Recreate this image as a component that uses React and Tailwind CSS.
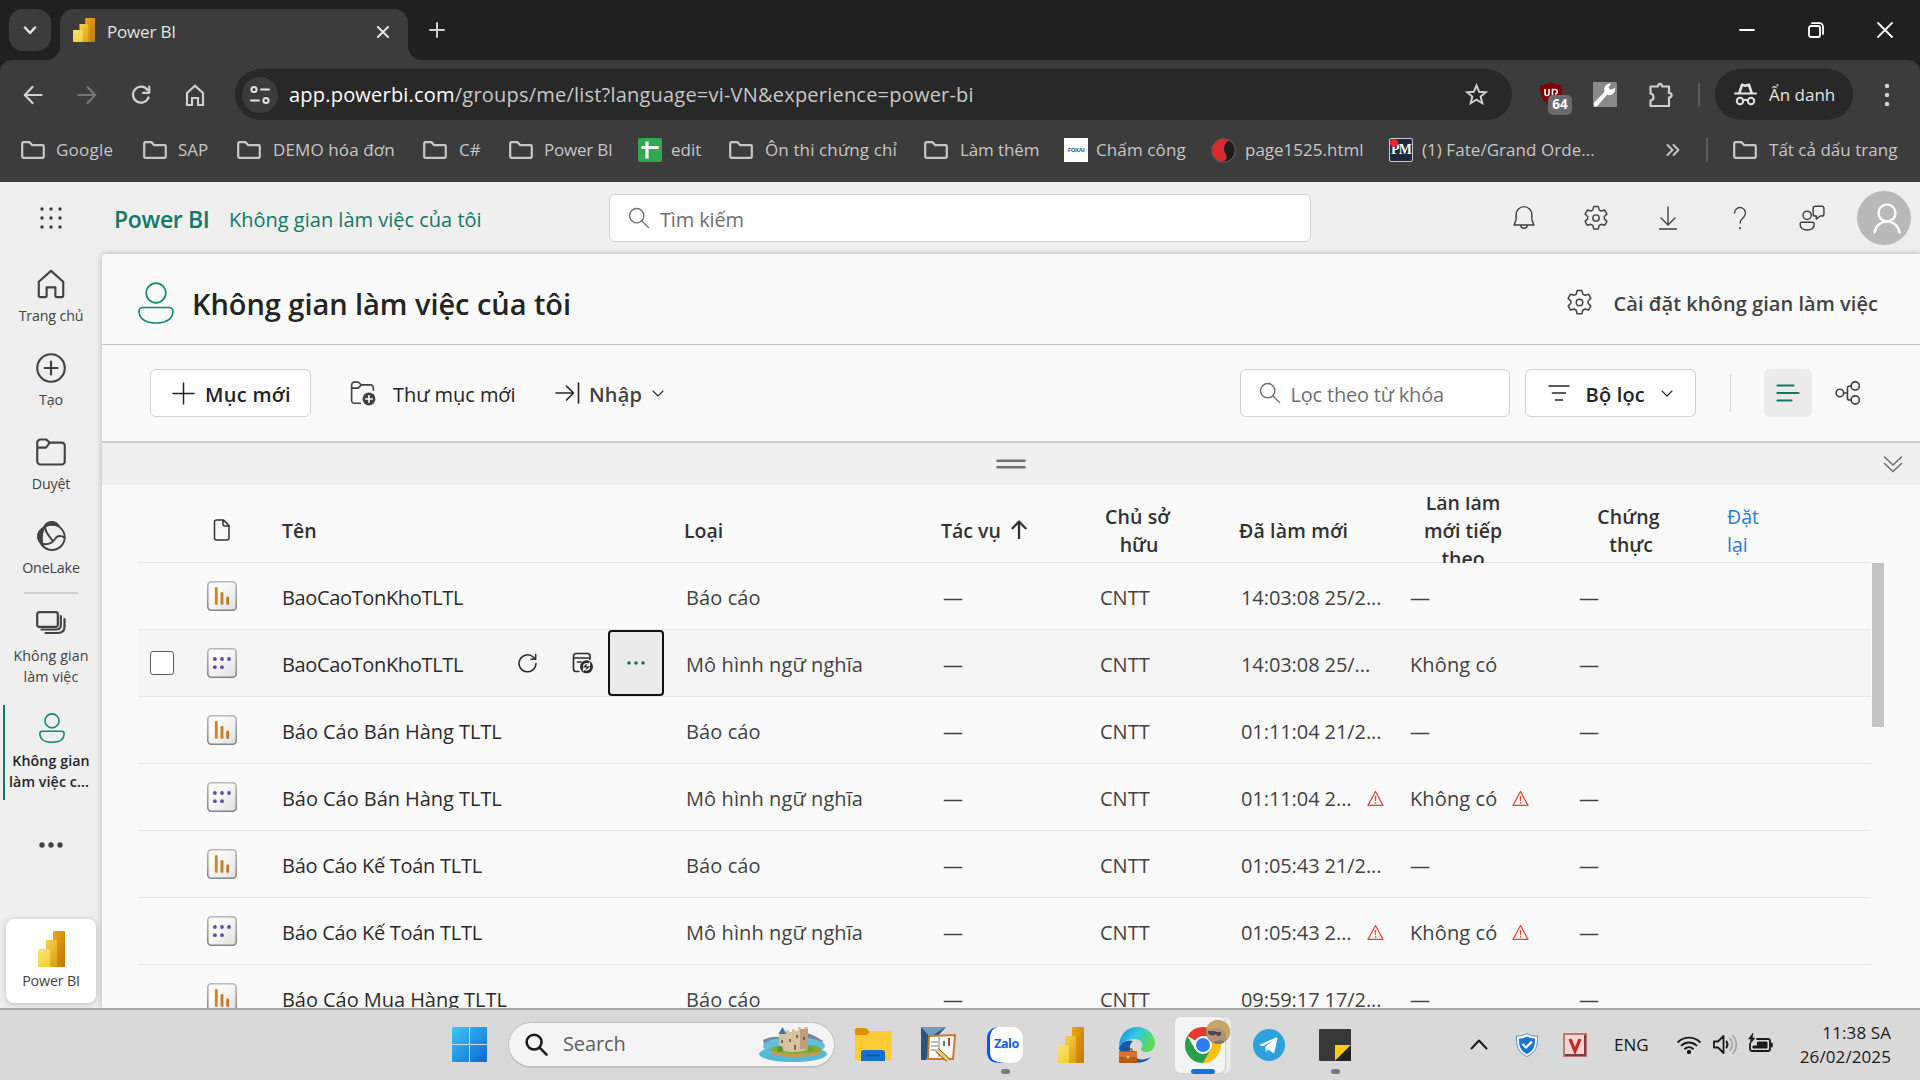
import React from "react";

function Ico({ w = 24, h, vb = "0 0 24 24", sw = 1.5, className = "", children }) {
  return (
    <svg width={w} height={h || w} viewBox={vb} fill="none" stroke="currentColor" strokeWidth={sw} strokeLinecap="round" strokeLinejoin="round" className={"block shrink-0 " + className}>
      {children}
    </svg>
  );
}

function PowerBI({ w, h, className = "" }) {
  return (
    <svg width={w} height={h} viewBox="0 0 27 36" preserveAspectRatio="none" className={"block shrink-0 " + className}>
      <defs>
        <linearGradient id="pbA" x1="0" y1="0" x2="1" y2="1"><stop offset="0" stopColor="#e9a80c" /><stop offset="1" stopColor="#c5760e" /></linearGradient>
        <linearGradient id="pbB" x1="0" y1="0" x2="0.6" y2="1"><stop offset="0" stopColor="#f6d150" /><stop offset="1" stopColor="#e0a518" /></linearGradient>
        <linearGradient id="pbC" x1="0" y1="0" x2="0.6" y2="1"><stop offset="0" stopColor="#fae678" /><stop offset="1" stopColor="#f3cf3c" /></linearGradient>
      </defs>
      <rect x="15" y="0" width="12" height="36" rx="1" fill="url(#pbA)" />
      <path d="M8 9h10a1 1 0 0 1 1 1v26H8z" fill="url(#pbB)" />
      <path d="M0 19a1 1 0 0 1 1-1h9.500a1.500 1.500 0 0 1 1.500 1.500V36H1a1 1 0 0 1-1-1z" fill="url(#pbC)" />
    </svg>
  );
}

const Folder = () => (
  <Ico w={24} h={18} vb="0 0 24 18" sw={2.2}><path d="M1.200 2.200a1 1 0 0 1 1-1h6.300l2.700 3h10.600a1 1 0 0 1 1 1v10.600a1 1 0 0 1-1 1H2.200a1 1 0 0 1-1-1z" strokeLinejoin="miter" /></Ico>
);
const Gear = ({ w = 26 }) => (
  <Ico w={w} sw={1.35}>
    <path d="M9.900 1.300h4.200l.8 3.200 1.900 1.100 3.200-.95 2.100 3.650-2.400 2.300v2.200l2.400 2.300-2.100 3.650-3.200-.95-1.900 1.100-.8 3.200H9.900l-.8-3.200-1.900-1.100-3.200.95-2.100-3.650 2.400-2.300v-2.200L1.900 8.300 4 4.650l3.200.95 1.900-1.100z" />
    <circle cx="12" cy="12" r="2.900" />
  </Ico>
);
const Magnifier = ({ w = 22, sw = 1.5 }) => (
  <Ico w={w} sw={sw}><circle cx="9.500" cy="9.500" r="7.800" /><path d="M15.200 15.200 22.500 22.500" /></Ico>
);
const Person = ({ w, h, sw }) => (
  <Ico w={w} h={h} vb="0 0 36 42" sw={sw}><circle cx="18" cy="11" r="9.800" /><path d="M4.500 25.500h27a3.500 3.500 0 0 1 3.500 3.500c0 8-7 12-17 12S1 37 1 29a3.500 3.500 0 0 1 3.500-3.500z" /></Ico>
);
const Warn = () => (
  <Ico w={17} vb="0 0 17 17" sw={1.2} className="text-[#e8432f]"><path d="M8.500 1.500 16 15.400H1z" /><path d="M8.500 6.300v4.200" /><path d="M8.500 12.800v.2" strokeWidth="1.600" /></Ico>
);
const Tile = ({ children }) => (
  <Ico w={30} vb="0 0 30 30" sw={2.800}>
    <defs>
      <linearGradient id="tileFill" x1="0" y1="0" x2="1" y2="1"><stop offset="0.300" stopColor="#fcfcfc" /><stop offset="1" stopColor="#e0e0e0" /></linearGradient>
      <linearGradient id="tileEdge" x1="0" y1="0" x2="0" y2="1"><stop offset="0" stopColor="#b8b8b8" /><stop offset="1" stopColor="#858585" /></linearGradient>
    </defs>
    <rect x="0.800" y="0.800" width="28.400" height="28.400" rx="3.500" fill="url(#tileFill)" stroke="url(#tileEdge)" strokeWidth="1.600" />
    {children}
  </Ico>
);
const ReportIcon = () => (
  <Tile><path d="M9.300 7.500v15" stroke="#cf8324" /><path d="M15 12.300v10.200" stroke="#c97a20" /><path d="M20.700 17v5.500" stroke="#c4701c" /></Tile>
);
const ModelIcon = () => (
  <Tile>
    <g fill="#6647b8" stroke="none"><circle cx="7.900" cy="11" r="1.900" /><circle cx="15" cy="11" r="1.900" /><circle cx="22" cy="11" r="1.900" /><circle cx="7.900" cy="19.200" r="1.900" /><circle cx="15" cy="19.200" r="1.900" /></g>
  </Tile>
);

function EditMark() {
  return (
    <svg width="24" height="24" viewBox="0 0 24 24" className="block shrink-0"><rect width="24" height="24" rx="2" fill="#2fa84f" /><path d="M9 3.500v17M3.500 9.500h17" stroke="#fff" strokeWidth="3.200" /></svg>
  );
}
function PageMark() {
  return (
    <svg width="25" height="25" viewBox="0 0 25 25" className="block shrink-0"><circle cx="12.500" cy="12.500" r="11.800" fill="#1c1c1c" stroke="#666" /><path d="M18 2.500A11.400 11.400 0 1 0 11 23.800c6-1.500 5-6 3-9S13 5 18 2.500z" fill="#d92b30" /></svg>
  );
}
const CompanyMark = () => <span className="flex size-6 shrink-0 items-center justify-center bg-white text-[6px] font-bold tracking-[-0.3px] text-[#1f5b94]">FOXAI</span>;
const PmMark = () => (
  <span className="relative flex size-6 shrink-0 items-end justify-center rounded-[2px] border border-[#c5c8cc] bg-[#20293c] pb-px font-['Liberation_Serif',serif] text-[14px] leading-[20px] font-bold tracking-[-0.800px] text-white">PM<span className="absolute top-0 left-0 size-2 rounded-full bg-[#f2222b]" /></span>
);

const bookmarks = [
  ["Google", "w-[122px]", "gap-[11px] tracking-[0.250px]", Folder],
  ["SAP", "w-[94px]", "gap-[11px]", Folder],
  ["DEMO hóa đơn", "w-[186px]", "gap-3 tracking-[0.120px]", Folder],
  ["C#", "w-[86px]", "gap-3", Folder],
  ["Power BI", "w-[129px]", "gap-[11px] tracking-[-0.200px]", Folder],
  ["edit", "w-[91px]", "gap-[9px]", EditMark],
  ["Ôn thi chứng chỉ", "w-[195px]", "gap-3 tracking-[0.120px]", Folder],
  ["Làm thêm", "w-[140px]", "gap-3 tracking-[-0.100px]", Folder],
  ["Chấm công", "w-[147px]", "gap-[8px] tracking-[0.120px]", CompanyMark],
  ["page1525.html", "w-[178px]", "gap-[9px]", PageMark],
  ["(1) Fate/Grand Orde...", "w-[277px]", "gap-[9px] tracking-[0.050px]", PmMark],
];

function Browser() {
  return (
    <div className="h-[182px] shrink-0 bg-[#202020] text-[#d0d0d0]">
      <div className="flex h-[60px] items-end">
        <div className="mb-[9px] ml-[9px] flex h-[42px] w-[42px] items-center justify-center rounded-[14px] bg-[#3c3c3c]">
          <Ico w={14} h={9} vb="0 0 14 9" sw={2.400} className="text-[#e4e4e4]"><path d="M2 1.500 7 7l5-5.500" /></Ico>
        </div>
        <div className="relative ml-[9px] flex h-[51px] w-[348px] items-center rounded-t-[14px] bg-[#3c3c3c] pr-[18px] pb-[6px] pl-[13px]">
          <svg width="14" height="14" className="absolute bottom-0 -left-[14px]"><path d="M14 0v14H0A14 14 0 0 0 14 0z" fill="#3c3c3c" /></svg>
          <svg width="14" height="14" className="absolute -right-[14px] bottom-0"><path d="M0 0v14h14A14 14 0 0 1 0 0z" fill="#3c3c3c" /></svg>
          <PowerBI w={22} h={24} className="-mt-1" />
          <span className="ml-[12px] text-[17px] tracking-[-0.180px] text-[#e3e3e3]">Power BI</span>
          <Ico w={12} vb="0 0 13 13" sw={2.200} className="mr-px ml-auto text-[#e3e3e3]"><path d="m1 1 11 11M12 1 1 12" /></Ico>
        </div>
        <Ico w={16} vb="0 0 16 16" sw={2} className="mb-[22px] ml-[21px]"><path d="M8 1v14M1 8h14" /></Ico>
        <div className="mr-[27px] mb-[22px] ml-auto flex items-center gap-[53px] text-white">
          <Ico w={16} vb="0 0 16 16" sw={1.800}><path d="M1 8h14" /></Ico>
          <Ico w={16} vb="0 0 16 16" sw={1.800}><rect x="1" y="4" width="11" height="11" rx="2" /><path d="M4 1.200h7.500a3.500 3.500 0 0 1 3.500 3.500V12" /></Ico>
          <Ico w={16} vb="0 0 16 16" sw={1.800}><path d="m1 1 14 14M15 1 1 15" /></Ico>
        </div>
      </div>
      <div className="h-[122px] rounded-t-[12px] bg-[#3c3c3c] pt-[9px]">
        <div className="flex h-[51px] items-center">
          <Ico w={20} vb="0 0 20 20" sw={2.200} className="ml-[23px]"><path d="M18.500 10H2M9.500 2 1.800 10l7.700 8" /></Ico>
          <Ico w={20} vb="0 0 20 20" sw={2.200} className="ml-[34px] text-[#757575]"><path d="M1.500 10H18M10.500 2l7.700 8-7.700 8" /></Ico>
          <Ico w={20} vb="0 0 20 20" sw={2.200} className="ml-[34px]"><path d="M17.500 12.500A8 8 0 1 1 16.500 5M18.300 1.500v6.300h-6.300" /></Ico>
          <Ico w={20} h={22} vb="0 0 20 22" sw={2.200} className="ml-[34px]"><path d="M2 9 10 1.800 18 9v12h-5v-7H7v7H2z" strokeLinejoin="miter" /></Ico>
          <div className="ml-[30px] flex h-[51px] w-[1277px] items-center rounded-full bg-[#282828] pr-[24px] pl-[7px]">
            <span className="flex size-9 items-center justify-center rounded-full bg-[#3c3c3c]">
              <Ico w={20} vb="0 0 20 20" sw={2} className="text-[#e3e3e3]"><circle cx="4" cy="4.500" r="2.600" /><path d="M11 4.500h8M1 15.500h8" /><circle cx="16" cy="15.500" r="2.600" /></Ico>
            </span>
            <span className="ml-[11px] text-[20px] tracking-[0.210px] text-[#c7c7c7]"><span className="text-white">app.powerbi.com</span>/groups/me/list?language=vi-VN&amp;experience=power-bi</span>
            <Ico w={23} vb="0 0 24 24" sw={2} className="ml-auto"><path d="m12 2.500 2.700 6.600 7.100.5-5.500 4.600 1.800 6.900L12 17.300l-6.100 3.800 1.800-6.900L2.200 9.600l7.100-.5z" strokeLinejoin="miter" /></Ico>
          </div>
          <div className="relative ml-[28px] h-[26px] w-[32px]">
            <svg width="22" height="24" viewBox="0 0 22 24" className="block"><path d="M11 0c3 2.500 7 3 11 3 0 10-1 16-11 21C1 19 0 13 0 3c4 0 8-.5 11-3z" fill="#820006" /><path d="M5 7v4.500a2 2 0 0 0 4 0V7M12.500 13V7.500h2.500a2 2 0 0 1 0 4.500" fill="none" stroke="#fff" strokeWidth="1.600" /></svg>
            <span className="absolute top-[13px] left-[8px] flex h-[20px] w-[24px] items-center justify-center rounded-[5px] bg-[#6b6b6b] text-[13.500px] font-bold text-white">64</span>
          </div>
          <svg width="24" height="25" viewBox="0 0 24 24" preserveAspectRatio="none" className="ml-[21px] block shrink-0"><rect width="24" height="24" rx="1" fill="#8a8a8a" /><path d="M1 20 11.500 9.500a6 6 0 0 1 6.500-8l-2.500 3.700 2.300 2.400L22 5.500a6 6 0 0 1-8 6.700L4 23.500H1z" fill="#fff" /></svg>
          <Ico w={26} vb="0 0 26 26" sw={2.200} className="ml-[30px]"><path d="M3.500 4.500h7.500c0-3.500 4-3.500 4 0h7v6.500c3.500 0 3.500 4.500 0 4.500v8.500H3.500v-5.500c4-.5 4-6.500 0-7z" /></Ico>
          <span className="ml-[25px] h-6 w-[2px] bg-[#5c5c5c]" />
          <div className="ml-[15px] flex h-[51px] w-[138px] items-center gap-[12px] rounded-full bg-[#282828] pl-[19px] text-[#e3e3e3]">
            <Ico w={23} h={23} vb="0 0 23 23" sw={2}><path d="M1 10.500h21" /><path d="M5.500 9.500 8 1.800l3.500 1 3.500-1L17.500 9.500" strokeWidth="2.600" /><circle cx="6" cy="18" r="3.200" /><circle cx="17" cy="18" r="3.200" /><path d="M9.200 17.500c1.500-1 3-1 4.600 0" /></Ico>
            <span className="text-[17px]">Ẩn danh</span>
          </div>
          <Ico w={6} h={26} vb="0 0 6 26" sw={4.500} className="ml-[31px]"><path d="M3 4v.01M3 13v.01M3 22v.01" /></Ico>
        </div>
        <div className="flex h-[60px] items-center pl-[21px] text-[17px] whitespace-nowrap text-[#c7c7c7]">
          {bookmarks.map(([label, width, gap, Mark]) => (
            <div key={label} className={`flex shrink-0 items-center ${gap} ${width}`}><Mark /><span>{label}</span></div>
          ))}
          <Ico w={14} vb="0 0 14 14" sw={1.900}><path d="m1.500 2 5 5-5 5M7.500 2l5 5-5 5" /></Ico>
          <span className="ml-[26px] h-6 w-[2px] bg-[#5c5c5c]" />
          <span className="ml-[25px] flex items-center gap-3"><Folder /><span className="tracking-[0.020px]">Tất cả dấu trang</span></span>
        </div>
      </div>
    </div>
  );
}

function TopBar() {
  return (
    <div className="flex h-[72px] shrink-0 items-center">
      <Ico w={24} vb="0 0 24 24" sw={3.400} className="ml-[39px] text-[#3a3a3a]"><path d="M3 3v.01M12 3v.01M21 3v.01M3 12v.01M12 12v.01M21 12v.01M3 21v.01M12 21v.01M21 21v.01" /></Ico>
      <span className="ml-[51px] w-[115px] pt-[3px] text-[23px] font-semibold tracking-[-0.350px] whitespace-nowrap text-[#117865]">Power BI</span>
      <span className="w-[380px] pt-[3px] text-[20px] text-[#117865]">Không gian làm việc của tôi</span>
      <div className="flex h-[48px] w-[702px] items-center gap-[10px] rounded-md border-[1.500px] border-[#d1d1d1] bg-white pl-[18px] text-[20px] text-[#707070]">
        <Magnifier w={22} /><span className="pt-[3px] tracking-[-0.150px]">Tìm kiếm</span>
      </div>
      <div className="ml-auto flex items-center text-[#424242]">
        <Ico w={26} sw={1.350} className="mr-[46px]"><path d="M12 1.500a7.300 7.300 0 0 0-7.300 7.300v5L2.800 18.500h18.400l-1.900-4.700v-5A7.300 7.300 0 0 0 12 1.500zM9 18.500a3 3 0 0 0 6 0" /></Ico>
        <Gear />
        <Ico w={24} sw={1.400} className="ml-[47px]"><path d="M12 1v17.500M5 12l7 7 7-7M3.500 23h17" /></Ico>
        <Ico w={24} sw={1.400} className="ml-[48px]"><path d="M6.500 7a5.500 5.500 0 1 1 9.600 3.700c-1.700 2-4.100 2.800-4.100 6.300" /><path d="M12 22v.2" strokeWidth="2" /></Ico>
        <Ico w={26} sw={1.350} className="ml-[47px]"><circle cx="7.500" cy="9.500" r="3.800" /><path d="M2.500 16h10a1.500 1.500 0 0 1 1.500 1.500c0 3.500-2.500 5.500-6.500 5.500S1 21 1 17.500A1.500 1.500 0 0 1 2.500 16zM15 1.200h6a2 2 0 0 1 2 2v5a2 2 0 0 1-2 2h-1.500L16 13v-2.800h-1a2 2 0 0 1-2-2v-5a2 2 0 0 1 2-2z" /></Ico>
        <span className="mr-[9px] ml-[32px] flex size-[54px] items-center justify-center rounded-full bg-[#b9b9b9] pl-[6px] text-white"><Ico w={28} h={31} vb="0 0 28 31" sw={2.400}><circle cx="14" cy="10" r="8.500" /><path d="M1.500 29.500C3.500 15 24.500 15 26.500 29.500" /></Ico></span>
      </div>
    </div>
  );
}

function NavItem({ label, children }) {
  return <div className="flex h-[84px] flex-col items-center"><div className="flex h-[30px] items-center">{children}</div><span className="mt-[7px] leading-[20px]">{label}</span></div>;
}

function Sidebar() {
  return (
    <div className="flex w-[102px] shrink-0 flex-col pt-[15px] text-center text-[14.250px] tracking-[-0.150px] text-[#424242]">
      <NavItem label="Trang chủ"><Ico w={30} h={30} sw={1.700}><path d="M2.200 10.200 12 1.500l9.800 8.700v11a1.300 1.300 0 0 1-1.300 1.300h-3.700a1.300 1.300 0 0 1-1.300-1.300v-6.500h-7v6.500a1.300 1.300 0 0 1-1.300 1.300H3.500a1.300 1.300 0 0 1-1.300-1.300z" /></Ico></NavItem>
      <NavItem label="Tạo"><Ico w={30} sw={1.700}><circle cx="12" cy="12" r="11" /><path d="M12 6.800v10.400M6.800 12h10.400" /></Ico></NavItem>
      <NavItem label="Duyệt"><Ico w={30} sw={1.700}><path d="M1 4.500A2.500 2.500 0 0 1 3.500 2h4.700L11 4.500h9.500A2.500 2.500 0 0 1 23 7v12.500a2.500 2.500 0 0 1-2.500 2.500h-17A2.500 2.500 0 0 1 1 19.500zM1 8.500h7L11 4.500" /></Ico></NavItem>
      <NavItem label="OneLake"><Ico w={30} vb="0 0 30 30" sw={1.900}><circle cx="16" cy="16.300" r="12.700" /><path d="M7.500 6.500C9 2 12 .5 16 .5c3.500 0 6.500 2 8 5.500C18.500 3.500 13 3.500 7.500 6.500z" fill="currentColor" strokeWidth="1" /><path d="M7 6.500C-.5 10-.5 21 7.500 24.500 5.500 19 6 12.500 8.500 7z" fill="currentColor" strokeWidth="1" /><path d="M9 6.500c1 7 5.500 9 8 14M7.500 23c6.500 1 9.500-2 11.500-5s5.500-3.800 9.500-1.500" /></Ico></NavItem>
      <span className="mx-6 -mt-[13px] h-[1.500px] bg-[#cfcfcf]" />
      <div className="mt-[16px] flex h-[95px] flex-col items-center">
        <Ico w={30} h={25} vb="0 0 30 25" sw={2.200}><rect x="1.200" y="2.200" width="20.600" height="14.600" rx="2" /><path d="M24.800 6v9c0 3-1.500 4.500-4.500 4.500H5.500M28.500 9v7.500c0 4-2.500 6.500-6.500 6.500H9.500" /></Ico>
        <span className="mt-[10px] leading-[21px] tracking-[0.100px]">Không gian<br />làm việc</span>
      </div>
      <div className="ml-[3px] flex h-[95px] flex-col items-center border-l-[2.500px] border-[#117865] pt-[8px] font-semibold text-[#242424]">
        <span className="-ml-[4px] text-[#168a77]"><Person w={26} h={30} sw={2.200} /></span>
        <span className="mt-[7px] -ml-[5px] leading-[21px] tracking-[0.080px] whitespace-nowrap"><span>Không gian</span><br /><span className="-ml-[4px]">làm việc c...</span></span>
      </div>
      <Ico w={26} h={8} vb="0 0 26 8" sw={5.400} className="mt-[41px] self-center"><path d="M4 4v.01M13 4v.01M22 4v.01" /></Ico>
      <div className="mt-auto mb-[5px] ml-[6px] flex h-[84px] w-[90px] flex-col items-center rounded-lg bg-white pt-3 shadow-[0_1px_6px_rgba(0,0,0,0.220)]">
        <PowerBI w={27} h={36} /><span className="mt-[4px] leading-5">Power BI</span>
      </div>
    </div>
  );
}

const cols = "grid grid-cols-[69px_75px_404px_257px_157px_141px_170px_168px_1fr] items-center";
const report = "Báo cáo";
const model = "Mô hình ngữ nghĩa";
const tight = "tracking-[-0.350px]";
const normal = "tracking-[-0.050px]";
const rows = [
  ["BaoCaoTonKhoTLTL", report, "14:03:08 25/2...", false, tight],
  ["BaoCaoTonKhoTLTL", model, "14:03:08 25/...", false, tight],
  ["Báo Cáo Bán Hàng TLTL", report, "01:11:04 21/2...", false, normal],
  ["Báo Cáo Bán Hàng TLTL", model, "01:11:04 2...", true, normal],
  ["Báo Cáo Kế Toán TLTL", report, "01:05:43 21/2...", false, "tracking-[-0.280px]"],
  ["Báo Cáo Kế Toán TLTL", model, "01:05:43 2...", true, "tracking-[-0.280px]"],
  ["Báo Cáo Mua Hàng TLTL", report, "09:59:17 17/2...", false, normal],
];

function Row({ row, active }) {
  const [name, type, time, warn, spacing] = row;
  return (
    <div className={`${cols} h-[67px] shrink-0 border-b-[1.500px] border-[#e6e6e6] whitespace-nowrap text-[#424242] ${active ? "bg-[#f5f5f5]" : ""}`}>
      <span>{active && <span className="ml-3 block size-6 rounded-[3px] border-[1.500px] border-[#5c5c5c] bg-white" />}</span>
      {type === report ? <ReportIcon /> : <ModelIcon />}
      <div className="flex items-center pr-[22px] text-[#2b2b2b]">
        <span className={`pt-[3px] ${spacing}`}>{name}</span>
        {active && (
          <div className="ml-auto flex items-center">
            <Ico w={21} vb="0 0 21 21" sw={1.500} className="mr-[34px]"><path d="M19 10.500a8.500 8.500 0 1 1-2.500-6.200L18.500 6M18.700 1.500V6.300h-4.800" /></Ico>
            <Ico w={22} vb="0 0 22 22" sw={1.600} className="mr-[14px]"><path d="M7 19.500H4a2.500 2.500 0 0 1-2.500-2.500V4A2.500 2.500 0 0 1 4 1.500h11.500A2.500 2.500 0 0 1 18 4v3.500M1.500 6H18M5.500 10H9" /><circle cx="14.500" cy="14.800" r="6.500" fill="currentColor" stroke="none" /><path d="M11.500 14a3.300 3.300 0 0 1 5.500-1.500M17.500 11v2.500H15M17.500 15.500a3.300 3.300 0 0 1-5.500 1.600M11.500 18.600v-2.500H14" stroke="#fff" strokeWidth="1.300" /></Ico>
            <span className="flex h-[66px] w-[56px] items-center justify-center rounded border-[2px] border-[#111] bg-[#ebebeb] text-[#117865]"><Ico w={20} h={6} vb="0 0 20 6" sw={3.600}><path d="M3 3v.01M10 3v.01M17 3v.01" /></Ico></span>
          </div>
        )}
      </div>
      <span className="pt-[3px] tracking-[0.100px]">{type}</span>
      <span className="pt-[3px]">—</span>
      <span className="pt-[3px]">CNTT</span>
      <span className="flex items-center pt-[3px]"><span className="w-[126px] tracking-[-0.080px]">{time}</span>{warn && <Warn />}</span>
      <span className="-ml-px flex items-center pt-[3px]">{type === report ? "—" : <span className="w-[102px] tracking-[0.120px]">Không có</span>}{warn && <Warn />}</span>
      <span className="pt-[3px]">—</span>
    </div>
  );
}

function Workspace() {
  return (
    <div className="flex min-w-0 flex-1 flex-col overflow-hidden rounded-tl bg-[#fafafa] text-[20px] shadow-[0_0_6px_rgba(0,0,0,0.250)]">
      <div className="flex h-[91px] shrink-0 items-center border-b-[1px] border-[#c8c8c8] pt-[8px] pr-[42px] pl-9">
        <span className="text-[#168a77]"><Person w={36} h={42} sw={1.700} /></span>
        <span className="ml-[18px] pt-[2px] text-[29px] font-semibold tracking-[-0.050px] text-[#242424]">Không gian làm việc của tôi</span>
        <span className="-mt-[1px] ml-auto text-[#424242]"><Gear w={27} /></span>
        <span className="ml-[21px] pt-[2px] text-[20px] font-semibold tracking-[0.050px] text-[#424242]">Cài đặt không gian làm việc</span>
      </div>
      <div className="flex h-[98px] shrink-0 items-center border-b-[2px] border-[#cbcbcb] pl-12 whitespace-nowrap text-[#242424]">
        <span className="flex h-12 w-[161px] items-center gap-[10px] rounded-md border-[1.500px] border-[#d1d1d1] bg-white pl-[21px] font-semibold"><Ico w={23} vb="0 0 23 23" sw={1.500}><path d="M11.500 1v21M1 11.500h21" /></Ico><span className="pt-[3px] tracking-[0.300px]">Mục mới</span></span>
        <Ico w={26} sw={1.500} className="ml-[39px] text-[#424242]"><path d="M9.500 21.500H4A2.500 2.500 0 0 1 1.500 19V4.500A2.500 2.500 0 0 1 4 2h3.500L10.500 4.500H19A2.500 2.500 0 0 1 21.500 7v2.500M1.500 7.500h6l3-3" /><circle cx="17.500" cy="17.500" r="6" fill="currentColor" stroke="none" /><path d="M17.500 14.500v6M14.500 17.500h6" stroke="#fff" /></Ico>
        <span className="ml-[17px] w-[162px] pt-[3px] tracking-[-0.050px]">Thư mục mới</span>
        <Ico w={25} h={22} vb="0 0 25 22" sw={1.600}><path d="M1 11h17.500M11.500 4l7 7-7 7M23.500 1v20" /></Ico>
        <span className="ml-[9px] pt-[3px] font-semibold tracking-[0.150px] text-[#424242]">Nhập</span>
        <Ico w={12} h={7} vb="0 0 12 7" sw={1.100} className="ml-[10px]"><path d="m1 1 5 5 5-5" /></Ico>
        <span className="ml-auto flex h-12 w-[270px] items-center gap-[10px] rounded-md border-[1.500px] border-[#d1d1d1] bg-white pl-[18px] text-[#707070]"><Magnifier w={22} /><span className="pt-[3px] tracking-[-0.200px]">Lọc theo từ khóa</span></span>
        <span className="ml-[15px] flex h-12 w-[171px] items-center rounded-md border-[1.500px] border-[#d1d1d1] bg-white pl-[22px]"><Ico w={22} h={18} vb="0 0 22 18" sw={1.600}><path d="M1 2h20M4.500 9h13M7.500 16h7" /></Ico><span className="ml-[16px] pt-[3px] font-semibold tracking-[0.200px]">Bộ lọc</span><Ico w={12} h={7} vb="0 0 12 7" sw={1.100} className="ml-[16px]"><path d="m1 1 5 5 5-5" /></Ico></span>
        <span className="ml-[34px] h-[38px] w-[1.500px] bg-[#d8d8d8]" />
        <span className="ml-[33px] flex size-12 items-center justify-center rounded-md bg-[#ebebeb] text-[#117865]"><Ico w={24} h={18} vb="0 0 24 18" sw={2.200}><path d="M1.500 1.500h16M1.500 9h21M1.500 16.500h14" /></Ico></span>
        <Ico w={26} sw={1.500} className="mr-[59px] ml-[23px] text-[#424242]"><circle cx="4.500" cy="12" r="3.500" /><circle cx="18.700" cy="5.500" r="3.800" /><circle cx="18.700" cy="18.500" r="3.800" /><path d="M8 12h3.500M14.900 5.500H13.500a2 2 0 0 0-2 2v9a2 2 0 0 0 2 2h1.400" /></Ico>
      </div>
      <div className="flex h-[42px] shrink-0 items-center bg-[#efefef] text-[#707070]">
        <Ico w={30} h={10} vb="0 0 30 10" sw={2.600} className="ml-[894px]"><path d="M1.500 1.800h27M1.500 8.200h27" /></Ico>
        <Ico w={20} h={17} vb="0 0 20 17" sw={1.600} className="mr-[17px] ml-auto"><path d="m1.500 1 8.500 8 8.500-8M1.500 7.500l8.500 8 8.500-8" /></Ico>
      </div>
      <div className="mt-[12px] ml-9 h-[66px] w-[1733px] shrink-0 border-b-[1.500px] border-[#e6e6e6] leading-[28px] font-semibold text-[#323232]">
        <div className={`${cols} h-[66px] overflow-hidden text-[19.500px]`}>
          <span />
          <Ico w={30} h={22} vb="0 0 30 22" sw={1.500}><path d="M9.500 1h7l5.500 5.500V19a2 2 0 0 1-2 2H9.500a2 2 0 0 1-2-2V3a2 2 0 0 1 2-2zM16 1v4.500a1.500 1.500 0 0 0 1.500 1.500H22" /></Ico>
          <span className="pt-[2px]">Tên</span>
          <span className="-ml-[2px] pt-[2px]">Loại</span>
          <span className="-ml-[2px] flex items-center"><span className="w-[70px] pt-[2px]">Tác vụ</span><Ico w={16} h={19} vb="0 0 16 19" sw={2.300} className="-mt-[2px]"><path d="M8 18V2M1.500 8.200 8 1.500l6.500 6.700" /></Ico></span>
          <span className="-ml-px w-[80px] pt-[2px] text-center"><span className="mr-[3px] tracking-[0.150px]">Chủ sở</span><br />hữu</span>
          <span className="-ml-[2px] pt-[2px] tracking-[0.150px]">Đã làm mới</span>
          <span className="-my-4 -ml-px w-[106px] pt-[2px] text-center">Lần làm<br />mới tiếp<br />theo</span>
          <span className="flex pt-[2px]"><span className="w-[104px] text-center"><span className="mr-[5px] tracking-[0.150px]">Chứng</span><br />thực</span><span className="ml-[44px] font-normal text-[#2b7cd3]">Đặt<br />lại</span></span>
        </div>
      </div>
      <div className="ml-9 flex min-h-0 flex-1 overflow-hidden">
        <div className="w-[1733px]">{rows.map((r, i) => <Row key={i} row={r} active={i === 1} />)}</div>
        <div className="ml-px h-[164px] w-[12px] bg-[#c4c4c4]" />
      </div>
    </div>
  );
}

function Castle() {
  return (
    <svg width="70" height="36" viewBox="0 0 70 36" className="block">
      <path d="M4 14c12-7 20 0 30-5s20-1 30 6l-3 8H6z" fill="#7785a8" />
      <ellipse cx="35" cy="20" rx="31" ry="9" fill="#66bfd9" /><ellipse cx="34" cy="28" rx="34" ry="8" fill="#56b7d7" />
      <ellipse cx="37" cy="25.500" rx="26" ry="5.500" fill="#c79a51" /><ellipse cx="37" cy="23" rx="25" ry="5" fill="#7cad3b" />
      <path d="M20 8h7V4h3v2h3V3h3v2h3V1h3v2h3V1h4v22c-8 4-21 4-29 0z" fill="#d8c3a0" /><path d="M41 3h8v20h-8z" fill="#bd9f7b" /><path d="m23.500 1-4 7h8z" fill="#3877b4" />
      <path d="M23 14v3M31 13v3M38 9v3M45 11v3M36 19v5" stroke="#6b4b32" strokeWidth="1.500" /><circle cx="21" cy="23" r="3" fill="#5c962e" /><circle cx="51" cy="23" r="2.500" fill="#6aa136" />
    </svg>
  );
}

function Taskbar() {
  return (
    <div className="flex h-[72px] shrink-0 items-center border-t-2 border-[#a9a9a9] bg-[#d9d9d9] pb-px text-[#1a1a1a]">
      <svg width="35" height="35" viewBox="0 0 35 35" className="ml-[452px] block"><defs><linearGradient id="win" x1="0" y1="0" x2="1" y2="1"><stop offset="0" stopColor="#3cc8fb" /><stop offset="1" stopColor="#0a68cf" /></linearGradient></defs><path d="M1 0h16v17H0V1a1 1 0 0 1 1-1zM18 0h16a1 1 0 0 1 1 1v16H18zM0 18h17v17H1a1 1 0 0 1-1-1zM18 18h17v16a1 1 0 0 1-1 1H18z" fill="url(#win)" /></svg>
      <div className="ml-[21px] flex h-[46px] w-[327px] items-center rounded-full border border-b-2 border-[#c2c2c2] bg-[#f4f4f4] pr-[5px] pl-[16px]">
        <Magnifier w={23} sw={2.600} /><span className="mr-auto ml-[15px] text-[20px] tracking-[-0.100px] text-[#5f5f5f]">Search</span><Castle />
      </div>
      <svg width="37" height="34" viewBox="0 0 37 34" className="ml-[20px] block"><path d="M0 2a2 2 0 0 1 2-2h9l4 4v6H0z" fill="#dc9308" /><path d="M0 7h12l4-4h19a1.500 1.500 0 0 1 1.500 1.500V31a1.500 1.500 0 0 1-1.500 1.500H1.500A1.500 1.500 0 0 1 0 31z" fill="#fecb34" /><path d="M6 33v-8a3 3 0 0 1 3-3h18a3 3 0 0 1 3 3v8z" fill="#1173ce" /><path d="M12 27.500h13" stroke="#0b4c92" strokeWidth="1.500" /></svg>
      <svg width="35" height="36" viewBox="0 0 35 36" className="ml-[29px] block"><path d="M0 0h25L15 11 5 33H0z" fill="#28557f" /><path d="M0 0h25L9 10z" fill="#6c9fc4" /><path d="m8 9 26-1-2 24H7z" fill="#fff" stroke="#c87a2d" strokeWidth="2" /><path d="M10 15h7M10 19h7M10 23h5M18 10v20" stroke="#a6a6a6" strokeWidth="1.500" /><path d="M23 19v-5" stroke="#2f9961" strokeWidth="2" /><path d="M28 19v-8" stroke="#cf3434" strokeWidth="2" /><path d="m16 23 11 10" stroke="#8b6c2a" strokeWidth="5" /><path d="m16 23 11 10" stroke="#f1d166" strokeWidth="3" /></svg>
      <div className="relative ml-[31px] flex size-9 items-center justify-center rounded-[11px] border-l-[3px] border-[#0a54f0] bg-white text-[12.500px] font-bold tracking-[-0.400px] text-[#0a63ee]">Zalo
        <svg width="20" height="8" viewBox="0 0 20 8" className="absolute bottom-0 -left-[2px]"><path d="M0 0c0 6 5 8 17 8-5-1-10-1-13-4z" fill="#0a54f0" /></svg>
        <span className="absolute top-[42px] left-[11px] h-[5px] w-[9px] rounded-full bg-[#7a7a7a]" />
      </div>
      <PowerBI w={27} h={36} className="ml-[34px]" />
      <svg width="37" height="36" viewBox="0 0 37 36" className="ml-[35px] block"><defs><linearGradient id="ed" x1="0" y1="0" x2="1" y2="0.400"><stop offset="0" stopColor="#1586d8" /><stop offset="0.500" stopColor="#2fc7e6" /><stop offset="1" stopColor="#5bdc57" /></linearGradient></defs><path d="M0 21C0 8 7 0 18 0c11 0 18 8 18 16 0 6-4 9-9 9-4 0-6-2-4-5 2-4-2-8-7-8C8 12 2 15 0 21z" fill="url(#ed)" /><path d="M0 21c2-6 8-9 14-7 0 0-4 3-3 9 2 9 12 12 21 7-6 7-18 8-26 0-4-4-6-6-6-9z" fill="#135cb0" /><rect y="24" width="18" height="12" rx="1" fill="#b95716" /><path d="M0 25h18v5H0z" fill="#d9742a" /><circle cx="9" cy="30" r="1.500" fill="#ffd36a" /><path d="M5 24v-2h8v2" stroke="#71340c" fill="none" /></svg>
      <div className="relative ml-[19px] flex h-[56px] w-[56px] items-center rounded-md border border-[#e7e7e7] bg-[#ededed]">
        <span className="absolute -top-px -left-px h-[56px] w-[50px] rounded-md bg-[#f4f4f4] shadow-[1px_0_1px_rgba(0,0,0,0.150)]" />
        <svg width="36" height="36" viewBox="0 0 36 36" className="relative ml-[9px] block"><path d="M18 18 2.400 9A18 18 0 0 1 33.600 9z" fill="#e33b2e" /><path d="M18 9h15.600A18 18 0 0 1 18 36l7.800-13.500z" fill="#fbc116" /><path d="M2.400 9A18 18 0 0 0 18 36l7.800-13.500L18 18l-7.800 4.500z" fill="#2a9f4a" /><circle cx="18" cy="18" r="9" fill="#fff" /><circle cx="18" cy="18" r="7" fill="#2d7cf0" /></svg>
        <svg width="24" height="24" viewBox="0 0 24 24" className="absolute top-[2px] left-[30px]"><defs><clipPath id="face"><circle cx="12" cy="12" r="12" /></clipPath></defs><g clipPath="url(#face)"><rect width="24" height="24" fill="#a99472" /><ellipse cx="9" cy="14" rx="7" ry="9" fill="#b98f78" /><path d="M0 0h24v20l-4-2c0-6-3-9-8-10L0 9z" fill="#c5a768" /><path d="M2 11h7l1 1h5v3c-2 2-4 1-5-1-2 2-6 2-8-1z" fill="#4d4747" /><path d="M6 24c2-4 8-4 12-3v3z" fill="#777" /></g></svg>
        <span className="absolute top-[51px] left-[15px] h-[5px] w-6 rounded-full bg-[#1473d4]" />
      </div>
      <svg width="32" height="32" viewBox="0 0 32 32" className="ml-[22px] block"><circle cx="16" cy="16" r="16" fill="#2da2dc" /><path d="m6 16 17-7.500c1-.4 1.700.2 1.400 1.400L21.500 23c-.2 1-1 1.300-1.800.8L12 18l9-7-11 6.300z" fill="#fff" /><path d="m12 18 .8 5 3-2.500z" fill="#cfe5f3" /></svg>
      <div className="relative ml-[34px]">
        <svg width="32" height="32" viewBox="0 0 32 32" className="block"><rect width="32" height="32" rx="1" fill="#383838" /><path d="M16 32V16h16z" fill="#fdcb16" /><path d="M16 32 32 16v16z" fill="#222" /></svg>
        <span className="absolute top-[40px] left-[12px] h-[5px] w-[9px] rounded-full bg-[#7a7a7a]" />
      </div>
      <Ico w={18} h={11} vb="0 0 18 11" sw={2} className="ml-[119px]"><path d="m1.500 9.500 7.500-8 7.500 8" /></Ico>
      <svg width="22" height="24" viewBox="0 0 22 24" className="ml-[28px] block"><path d="M11 .5c3 2 7 2.500 10.500 2.500 0 10-1 16-10.500 20.500C1.500 19 .5 13 .5 3 4 3 8 2.500 11 .5z" fill="#fff" stroke="#4d91cf" /><path d="M11 3.500c3 1.500 5 2 8 2 0 8-1 12-8 15.500-7-3.500-8-7.500-8-15.500 3 0 5-.5 8-2z" fill="#1b74ce" /><path d="m6.500 11 3.500 3.500 6-6" stroke="#fff" strokeWidth="2.200" fill="none" /></svg>
      <svg width="24" height="24" viewBox="0 0 24 24" className="ml-[25px] block"><rect x="1" y="1" width="22" height="22" fill="#f8d5d3" stroke="#b9797a" strokeWidth="2" /><path d="M2 22h20V2" stroke="#863c3d" strokeWidth="2" fill="none" /><path d="m7 6 5 12 5-12" stroke="#c5262b" strokeWidth="3.200" fill="none" /></svg>
      <span className="ml-[27px] w-[63px] text-[17px]">ENG</span>
      <Ico w={24} h={19} vb="0 0 24 19" sw={1.900}><path d="M1.200 7a15.500 15.500 0 0 1 21.600 0M4.600 10.400a10.700 10.700 0 0 1 14.800 0M8 13.700a6 6 0 0 1 8 0" /><circle cx="12" cy="17" r="1.200" fill="currentColor" /></Ico>
      <Ico w={24} h={21} vb="0 0 24 21" sw={1.800} className="ml-[12px]"><path d="M1 7.500h4L10.500 2v17L5 13.500H1z" /><path d="M13.500 7.500a5 5 0 0 1 0 6" /><path d="M17 4.500a9 9 0 0 1 0 12M20 1.500a14 14 0 0 1 0 18" stroke="#a5a5a5" /></Ico>
      <Ico w={25} h={20} vb="0 0 25 20" sw={1.800} className="-mt-[3px] ml-[11px]"><path d="M9 6h11a2 2 0 0 1 2 2v8a2 2 0 0 1-2 2H4a2 2 0 0 1-2-2v-5M23.800 10.500v3" /><path d="M10 9h9v6H5v-2h4z" fill="currentColor" strokeWidth="1" /><path d="M5 0 .5 6H3L2 11l5-6H4.500z" fill="currentColor" strokeWidth="0.500" /></Ico>
      <div className="mr-[29px] ml-auto text-right text-[17px] leading-6 tracking-[0.100px]">11:38 SA<br />26/02/2025</div>
    </div>
  );
}

export default function App() {
  return (
    <div className="flex h-[1080px] w-[1920px] flex-col overflow-hidden bg-[#efefef] font-['Open_Sans','Noto_Sans',sans-serif]">
      <Browser />
      <div className="flex min-h-0 flex-1 flex-col">
        <TopBar />
        <div className="flex min-h-0 flex-1"><Sidebar /><Workspace /></div>
      </div>
      <Taskbar />
    </div>
  );
}
